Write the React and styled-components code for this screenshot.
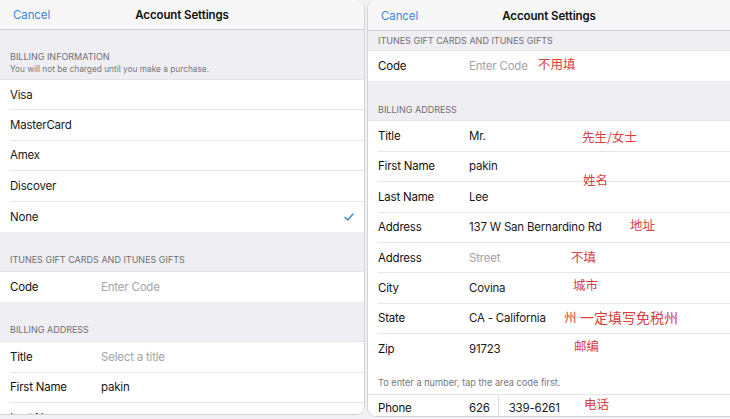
import React from "react";
import styled, { createGlobalStyle } from "styled-components";

const Global = createGlobalStyle`
  html, body { margin: 0; padding: 0; }
  body {
    width: 730px;
    height: 419px;
    overflow: hidden;
    background: #f2f2f4;
    font-family: Inter, "Noto Sans", "Liberation Sans", sans-serif;
    -webkit-font-smoothing: antialiased;
  }
`;

const Page = styled.div`
  display: flex;
  align-items: flex-start;
  gap: 2px;
  width: 730px;
  height: 419px;
`;

const Panel = styled.div`
  position: relative;
  box-sizing: border-box;
  display: flex;
  flex-direction: column;
  overflow: hidden;
  background: #ffffff;
  border: 1px solid #d4d4d8;
  height: ${(p) => p.$h}px;
  ${(p) =>
    p.$side === "left"
      ? `width: 365px; border-left: none; border-top: none; border-radius: 0 9px 9px 0;`
      : `flex: 1; border-right: none; border-top: none; border-radius: 9px 0 0 9px;`}
`;

const NavBar = styled.div`
  flex: none;
  display: grid;
  grid-template-columns: 1fr auto 1fr;
  align-items: center;
  height: 29px;
  background: #f7f7f8;
  border-bottom: 1px solid #cfcfd3;
  padding-top: ${(p) => p.$pt || 0}px;
`;

const Cancel = styled.span`
  justify-self: start;
  padding-left: ${(p) => p.$pl}px;
  font-size: 11.5px;
  letter-spacing: -0.1px;
  color: #3d86d8;
`;

const NavTitle = styled.span`
  font-size: 11.5px;
  font-weight: 600;
  color: #111;
  letter-spacing: -0.1px;
`;

const Section = styled.div`
  flex: none;
  box-sizing: border-box;
  display: flex;
  flex-direction: column;
  justify-content: flex-end;
  height: ${(p) => p.$h}px;
  padding: 0 10px ${(p) => p.$pb}px;
  background: ${(p) => (p.$white ? "#ffffff" : "#efeff3")};
  border-bottom: 1px solid #e4e4e8;
`;

const SectionTitle = styled.div`
  font-size: 9px;
  line-height: 13px;
  color: #6e6e74;
`;

const SectionNote = styled.div`
  font-size: ${(p) => p.$size || 9}px;
  line-height: 13px;
  color: #77777c;
`;

const Group = styled.div`
  flex: none;
  display: flex;
  flex-direction: column;
  background: #ffffff;
`;

const Row = styled.div`
  box-sizing: border-box;
  height: ${(p) => p.$h || 30.4}px;
  padding-left: 10px;
  display: flex;
  &:not(:last-child) > div {
    border-bottom: 1px solid #e6e6ea;
  }
`;

const RowInner = styled.div`
  flex: 1;
  display: flex;
  align-items: center;
  padding-right: 10px;
`;

const Label = styled.span`
  width: 91px;
  flex: none;
  font-size: 11.5px;
  letter-spacing: -0.2px;
  color: #111;
`;

const Value = styled.span`
  font-size: 11.5px;
  letter-spacing: -0.2px;
  color: ${(p) => (p.$placeholder ? "#a3a3a8" : "#1a1a1a")};
`;

const Spacer = styled.span`
  flex: 1;
`;

const PhoneDivider = styled.span`
  align-self: stretch;
  width: 1px;
  background: #dcdce0;
  margin: 0 10px 0 8px;
`;

const Annotation = styled.span`
  position: absolute;
  left: ${(p) => p.$x}px;
  top: ${(p) => p.$y}px;
  font-family: "Noto Sans CJK SC", "Noto Sans", sans-serif;
  font-size: ${(p) => p.$size || 12.5}px;
  line-height: 14px;
  color: #d6403e;
  white-space: pre;
`;

const Check = () => (
  <svg width="10" height="8" viewBox="0 0 10 8">
    <polyline
      points="1,4.2 3.8,7 9,1"
      fill="none"
      stroke="#3d86d8"
      strokeWidth="1.4"
      strokeLinecap="round"
      strokeLinejoin="round"
    />
  </svg>
);

const Item = ({ label, value, placeholder, children, h }) => (
  <Row $h={h}>
    <RowInner>
      {label !== undefined && <Label>{label}</Label>}
      {value !== undefined && <Value $placeholder={placeholder}>{value}</Value>}
      {children}
    </RowInner>
  </Row>
);

const PlainItem = ({ text, children }) => (
  <Row>
    <RowInner>
      <Value>{text}</Value>
      <Spacer />
      {children}
    </RowInner>
  </Row>
);

export default function App() {
  return (
    <>
      <Global />
      <Page>
        <Panel $side="left" $h={415}>
          <NavBar>
            <Cancel $pl={13}>Cancel</Cancel>
            <NavTitle>Account Settings</NavTitle>
            <span />
          </NavBar>
          <Section $h={50} $pb={3}>
            <SectionTitle>BILLING INFORMATION</SectionTitle>
            <SectionNote $size={8.3}>You will not be charged until you make a purchase.</SectionNote>
          </Section>
          <Group>
            <PlainItem text="Visa" />
            <PlainItem text="MasterCard" />
            <PlainItem text="Amex" />
            <PlainItem text="Discover" />
            <PlainItem text="None">
              <Check />
            </PlainItem>
          </Group>
          <Section $h={40} $pb={5}>
            <SectionTitle>ITUNES GIFT CARDS AND ITUNES GIFTS</SectionTitle>
          </Section>
          <Group>
            <Item label="Code" value="Enter Code" placeholder />
          </Group>
          <Section $h={40} $pb={5}>
            <SectionTitle>BILLING ADDRESS</SectionTitle>
          </Section>
          <Group>
            <Item label="Title" value="Select a title" placeholder />
            <Item label="First Name" value="pakin" />
            <Item label="Last Name" value="wong" />
          </Group>
        </Panel>

        <Panel $side="right" $h={417}>
          <NavBar $pt={1}>
            <Cancel $pl={13}>Cancel</Cancel>
            <NavTitle>Account Settings</NavTitle>
            <span />
          </NavBar>
          <Section $h={20} $pb={3}>
            <SectionTitle>ITUNES GIFT CARDS AND ITUNES GIFTS</SectionTitle>
          </Section>
          <Group>
            <Item label="Code" value="Enter Code" placeholder />
          </Group>
          <Section $h={40} $pb={4}>
            <SectionTitle>BILLING ADDRESS</SectionTitle>
          </Section>
          <Group>
            <Item label="Title" value="Mr." />
            <Item label="First Name" value="pakin" />
            <Item label="Last Name" value="Lee" />
            <Item label="Address" value="137 W San Bernardino Rd" />
            <Item label="Address" value="Street" placeholder />
            <Item label="City" value="Covina" />
            <Item label="State" value="CA - California" />
            <Item label="Zip" value="91723" />
          </Group>
          <Section $h={30} $pb={5} $white>
            <SectionNote $size={9.2}>To enter a number, tap the area code first.</SectionNote>
          </Section>
          <Group>
            <Item label="Phone" h={26}>
              <Value>626</Value>
              <PhoneDivider />
              <Value>339-6261</Value>
            </Item>
          </Group>

          <Annotation $x={170} $y={57}>不用填</Annotation>
          <Annotation $x={214} $y={130}>先生/女士</Annotation>
          <Annotation $x={215} $y={173}>姓名</Annotation>
          <Annotation $x={262} $y={218}>地址</Annotation>
          <Annotation $x={203} $y={250}>不填</Annotation>
          <Annotation $x={205} $y={278}>城市</Annotation>
          <Annotation $x={196} $y={310}>州</Annotation>
          <Annotation $x={212} $y={310} $size={14}>一定填写免税州</Annotation>
          <Annotation $x={206} $y={339}>邮编</Annotation>
          <Annotation $x={216} $y={397}>电话</Annotation>
        </Panel>
      </Page>
    </>
  );
}
